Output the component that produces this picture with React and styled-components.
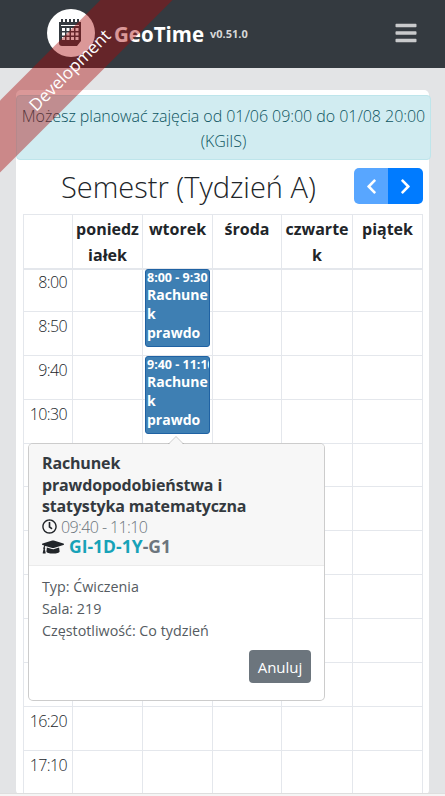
import React from 'react';
import styled, {createGlobalStyle, css} from 'styled-components';
import {FaBars, FaChevronLeft, FaChevronRight, FaGraduationCap, FaRegClock} from 'react-icons/fa';

const GlobalStyle = createGlobalStyle`
  html, body {
    margin: 0;
    height: 100%;
    overflow: hidden;
  }
  body {
    background: #e3e4e6;
    color: #212529;
    font-family: "Open Sans", "Liberation Sans", sans-serif;
    font-size: 16px;
    line-height: 1.5;
  }
  * {
    box-sizing: border-box;
  }
`;

const Page = styled.div`
  height: 796px;
  overflow: hidden;
`;

const Navbar = styled.header`
  height: 68px;
  background: #343a40;
  display: flex;
  align-items: center;
  justify-content: space-between;
  padding: 0 27px 0 47px;
`;

const Brand = styled.div`
  display: flex;
  align-items: center;
  margin-top: -2px;
`;

const LogoCircle = styled.div`
  width: 48px;
  height: 48px;
  border-radius: 50%;
  background: #fff;
  margin-right: 19px;
  display: flex;
`;

const BrandName = styled.span`
  color: #fff;
  font-size: 20.5px;
  font-weight: 700;
  line-height: 1;
  margin-top: 3px;
`;

const Version = styled.small`
  color: #d8d8d8;
  font-size: 11px;
  font-weight: 700;
  margin-left: 6px;
  margin-top: 2px;
`;

const MenuButton = styled.div`
  color: #c9cacc;
  font-size: 24px;
  display: flex;
  margin-top: -3px;
`;

const Ribbon = styled.div`
  position: absolute;
  left: -82px;
  top: 42.500px;
  width: 300px;
  height: 51px;
  transform: rotate(-45deg);
  background: rgba(170, 10, 10, 0.42);
  color: #fff;
  font-size: 17px;
  font-weight: 400;
  display: flex;
  align-items: center;
  justify-content: center;
  padding-top: 4px;
  z-index: 10;
`;

const Main = styled.main`
  padding: 22px 16px 0;
`;

const Card = styled.section`
  background: #fff;
  border-radius: 5px;
  padding: 5px 7px 0;
`;

const Alert = styled.div`
  margin: 0 -9px 0 -7px;
  padding: 8px 0 5px;
  min-height: 63px;
  background: #d1ecf1;
  border: 1px solid #bee5eb;
  border-radius: 4px;
  color: #0c5460;
  font-weight: 300;
  font-size: 16px;
  letter-spacing: -0.05px;
  line-height: 25px;
  text-align: center;
`;

const TitleRow = styled.div`
  display: flex;
  align-items: center;
  justify-content: space-between;
  height: 54px;
`;

const Title = styled.h2`
  margin: 0 0 0 38px;
  font-size: 29px;
  font-weight: 300;
  line-height: 1.2;
  color: #212529;
`;

const ButtonGroup = styled.div`
  display: flex;
  margin: -2px -1px 0 0;
`;

const NavButton = styled.button`
  width: ${({$disabled}) => $disabled ? 34 : 35}px;
  height: 36px;
  border: 0;
  padding: 0;
  color: #fff;
  font-size: 17px;
  display: flex;
  align-items: center;
  justify-content: center;
  ${({$disabled}) => $disabled ? css`
    background: #58a6ff;
    border-radius: 5px 0 0 5px;
  ` : css`
    background: #007bff;
    border-radius: 0 5px 5px 0;
  `}
`;

const Schedule = styled.div`
  position: relative;
  width: 400px;
  border-top: 1px solid #e4e7ec;
  border-left: 1px solid #e4e7ec;
`;

const Row = styled.div`
  display: grid;
  grid-template-columns: 49px 70px 70px 69px 71px 70px;
  height: ${({$height}) => $height}px;
`;

const HeadCell = styled.div`
  border-right: 1px solid #e4e7ec;
  border-bottom: 2px solid #e4e7ec;
  padding: 1px 3px 0;
  font-weight: 700;
  font-size: 16px;
  line-height: 26px;
  text-align: center;
  word-break: break-all;
`;

const Cell = styled.div`
  position: relative;
  border-right: 1px solid #e4e7ec;
  border-bottom: 1px solid #e4e7ec;
`;

const TimeCell = styled(Cell)`
  padding: 2px 5px 0 0;
  font-weight: 300;
  font-size: 16px;
  letter-spacing: -0.6px;
  line-height: 24px;
  text-align: right;
`;

const Event = styled.div`
  position: absolute;
  left: 2px;
  top: ${({$top}) => $top}px;
  z-index: 1;
  width: 65px;
  height: 78px;
  overflow: hidden;
  padding: 0 1px;
  background: #3e7fb3;
  border: 1px solid #1f62a3;
  border-radius: 3px;
  color: #fff;
  font-weight: 700;
`;

const EventTime = styled.div`
  font-size: 12.500px;
  line-height: 15px;
  white-space: nowrap;
`;

const EventName = styled.div`
  height: 57px;
  overflow: hidden;
  font-size: 14px;
  line-height: 19px;
  overflow-wrap: break-word;
`;

const Popover = styled.div`
  position: absolute;
  left: 4px;
  top: 228px;
  z-index: 2;
  width: 297px;
  height: 258px;
  background: #fff;
  border: 1px solid rgba(0, 0, 0, 0.2);
  border-radius: 5px;
  &::before, &::after {
    content: "";
    position: absolute;
    left: 139px;
    width: 0;
    height: 0;
    border-style: solid;
    border-width: 0 8px 8px;
    border-color: transparent;
  }
  &::before {
    top: -8px;
    border-bottom-color: rgba(0, 0, 0, 0.2);
  }
  &::after {
    top: -7px;
    border-bottom-color: #f7f7f7;
  }
`;

const PopoverHeader = styled.div`
  height: 122px;
  padding: 9px 13px 0;
  background: #f7f7f7;
  border-bottom: 1px solid #ebebeb;
  border-radius: 4px 4px 0 0;
`;

const PopoverTitle = styled.div`
  font-size: 16px;
  font-weight: 700;
  letter-spacing: -0.15px;
  line-height: 21.500px;
  color: #343a40;
  width: 240px;
`;

const MetaLine = styled.div`
  display: flex;
  align-items: center;
  gap: 4px;
  margin-top: -1px;
  font-size: 16px;
  font-weight: 300;
  letter-spacing: -0.6px;
  line-height: 20px;
  color: #6c757d;
  svg {
    color: #212529;
    font-size: 15px;
  }
`;

const GroupLine = styled(MetaLine)`
  gap: 5px;
  margin-top: -1px;
  font-size: 17.500px;
  font-weight: 700;
  letter-spacing: 0;
  line-height: 19px;
  svg {
    font-size: 22px;
  }
`;

const GroupCode = styled.span`
  color: #17a2b8;
`;

const PopoverBody = styled.div`
  padding: 10px 14px 0 13px;
  font-size: 14.300px;
  font-weight: 400;
  line-height: 22px;
  color: #555b61;
`;

const Actions = styled.div`
  display: flex;
  justify-content: flex-end;
  margin-top: 8px;
`;

const CancelButton = styled.button`
  width: 62px;
  height: 33px;
  margin-right: -1px;
  border: 0;
  border-radius: 4px;
  padding: 0;
  background: #6c757d;
  color: #fff;
  font-family: inherit;
  font-size: 15px;
`;

const Footer = styled.footer`
  position: absolute;
  left: 0;
  right: 0;
  top: 793px;
  height: 3px;
  background: #f5f5f5;
  border-top: 1px solid #dedede;
  z-index: 3;
`;

const hours = ['8:00', '8:50', '9:40', '10:30', '', '', '', '', '', '', '16:20', '17:10'];
const events = {
    0: {time: '8:00 - 9:30', top: 1},
    2: {time: '9:40 - 11:10', top: 0},
};
const days = ['poniedziałek', 'wtorek', 'środa', 'czwartek', 'piątek'];
const courseName = 'Rachunek prawdopodobieństwa i statystyka matematyczna';

const Logo = () => (
    <svg width="48" height="48" viewBox="0 0 48 48">
        <path fill="#343a40" d="M12 13h22v19l-4 5H15a3 3 0 0 1-3-3z"/>
        <path fill="#343a40" d="M14 10h2v5h-2zM18 10h2v5h-2zM22 10h2v5h-2zM26 10h2v5h-2zM30 10h2v5h-2z"/>
        <path fill="#fff" d="M14 16h18v1H14z"/>
        <path fill="#fff" d="M15 19h3v3h-3zM19.500 19h3v3h-3zM24 19h3v3h-3zM28.500 19h3v3h-3zM15 23.500h3v3h-3zM19.500 23.500h3v3h-3zM24 23.500h3v3h-3zM28.500 23.500h3v3h-3zM15 28h3v3h-3zM19.500 28h3v3h-3zM24 28h3v3h-3zM28.500 28h3v3h-3z"/>
    </svg>
);

export default function App() {
    return (
        <Page>
            <GlobalStyle/>
            <Ribbon>Development</Ribbon>
            <Navbar>
                <Brand>
                    <LogoCircle><Logo/></LogoCircle>
                    <BrandName>GeoTime</BrandName>
                    <Version>v0.51.0</Version>
                </Brand>
                <MenuButton><FaBars/></MenuButton>
            </Navbar>
            <Main>
                <Card>
                    <Alert>Możesz planować zajęcia od 01/06 09:00 do 01/08 20:00 (KGiIS)</Alert>
                    <TitleRow>
                        <Title>Semestr (Tydzień A)</Title>
                        <ButtonGroup>
                            <NavButton $disabled><FaChevronLeft/></NavButton>
                            <NavButton><FaChevronRight/></NavButton>
                        </ButtonGroup>
                    </TitleRow>
                    <Schedule>
                        <Row $height={53}>
                            <HeadCell/>
                            {days.map(day => <HeadCell key={day}>{day}</HeadCell>)}
                        </Row>
                        {hours.map((hour, index) => (
                            <Row $height={43.9} key={index}>
                                <TimeCell>{hour}</TimeCell>
                                {days.map((day, dayIndex) => (
                                    <Cell key={day}>
                                        {dayIndex === 1 && events[index] && (
                                            <Event $top={events[index].top}>
                                                <EventTime>{events[index].time}</EventTime>
                                                <EventName>{courseName}</EventName>
                                            </Event>
                                        )}
                                    </Cell>
                                ))}
                            </Row>
                        ))}
                        <Popover>
                            <PopoverHeader>
                                <PopoverTitle>{courseName}</PopoverTitle>
                                <MetaLine><FaRegClock/>09:40 - 11:10</MetaLine>
                                <GroupLine>
                                    <FaGraduationCap/>
                                    <span><GroupCode>GI-1D-1Y</GroupCode>-G1</span>
                                </GroupLine>
                            </PopoverHeader>
                            <PopoverBody>
                                <div>Typ: Ćwiczenia</div>
                                <div>Sala: 219</div>
                                <div>Częstotliwość: Co tydzień</div>
                                <Actions><CancelButton>Anuluj</CancelButton></Actions>
                            </PopoverBody>
                        </Popover>
                    </Schedule>
                </Card>
            </Main>
            <Footer/>
        </Page>
    );
}
